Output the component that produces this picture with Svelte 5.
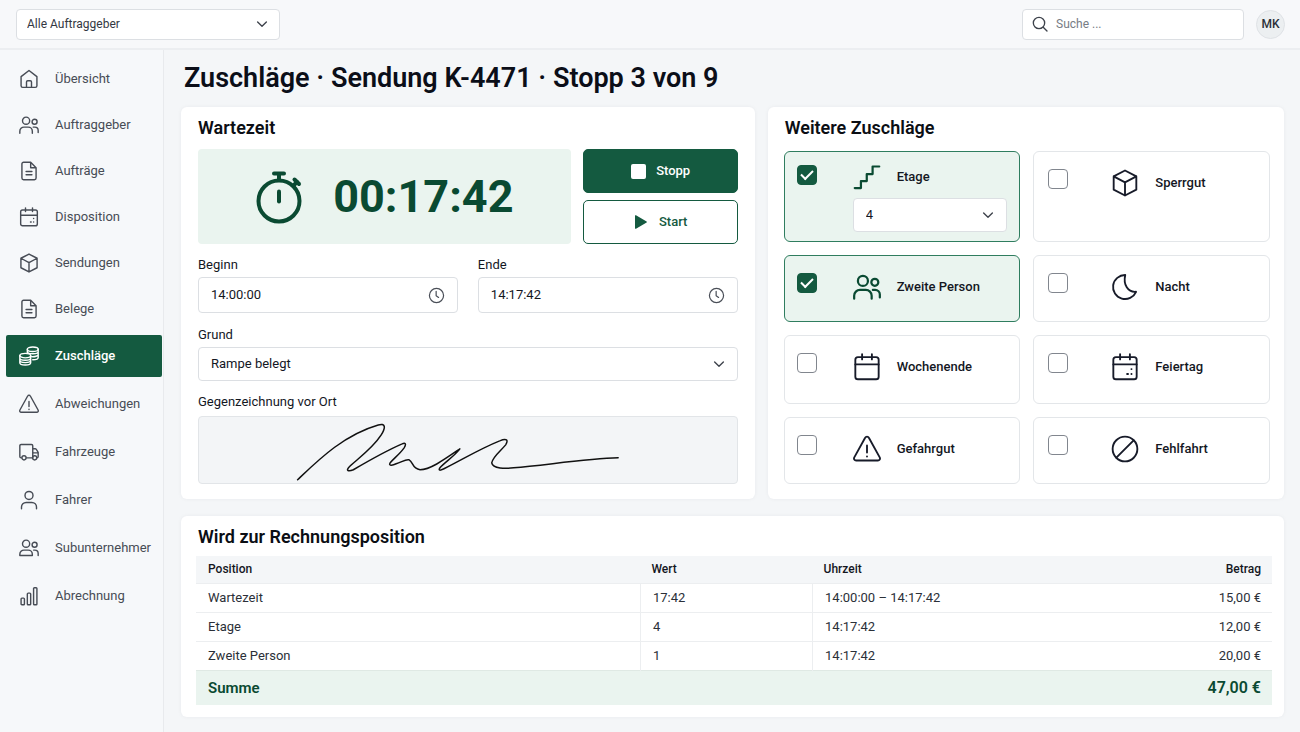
<script>
  const navGroups = [
    [
      { label: 'Übersicht', icon: 'home' },
      { label: 'Auftraggeber', icon: 'users' },
      { label: 'Aufträge', icon: 'file' },
      { label: 'Disposition', icon: 'calendarDots' },
      { label: 'Sendungen', icon: 'box' },
      { label: 'Belege', icon: 'file' }
    ],
    [
      { label: 'Zuschläge', icon: 'coins', active: true },
      { label: 'Abweichungen', icon: 'warning' },
      { label: 'Fahrzeuge', icon: 'truck' },
      { label: 'Fahrer', icon: 'user' },
      { label: 'Subunternehmer', icon: 'usersClosed' },
      { label: 'Abrechnung', icon: 'bars' }
    ]
  ];

  let surcharges = $state([
    { id: 'etage', label: 'Etage', icon: 'stairs', checked: true, floors: true },
    { id: 'sperrgut', label: 'Sperrgut', icon: 'box', checked: false },
    { id: 'person', label: 'Zweite Person', icon: 'users', checked: true },
    { id: 'nacht', label: 'Nacht', icon: 'moon', checked: false },
    { id: 'wochenende', label: 'Wochenende', icon: 'calendar', checked: false },
    { id: 'feiertag', label: 'Feiertag', icon: 'calendarDots', checked: false },
    { id: 'gefahrgut', label: 'Gefahrgut', icon: 'warning', checked: false },
    { id: 'fehlfahrt', label: 'Fehlfahrt', icon: 'ban', checked: false }
  ]);

  const rows = [
    ['Wartezeit', '17:42', '14:00:00 – 14:17:42', '15,00 €'],
    ['Etage', '4', '14:17:42', '12,00 €'],
    ['Zweite Person', '1', '14:17:42', '20,00 €']
  ];

  let begin = $state('14:00:00');
  let end = $state('14:17:42');
</script>

{#snippet icon(name)}
  <svg class="icon" viewBox="0 0 24 24" aria-hidden="true">
    {#if name === 'home'}
      <path d="M2.500 9.200 12 1.800l9.500 7.400V20a2 2 0 0 1-2 2h-15a2 2 0 0 1-2-2zM9 22v-6.500a1.500 1.500 0 0 1 1.500-1.500h3a1.500 1.500 0 0 1 1.500 1.500V22" />
    {:else if name === 'users'}
      <circle cx="8.500" cy="6.800" r="4.300" /><circle cx="18.700" cy="8" r="3" />
      <path d="M1 22v-2.500a5 5 0 0 1 5-5h5a5 5 0 0 1 5 5V22M17 14.500h2a4 4 0 0 1 4 4V21" />
    {:else if name === 'usersClosed'}
      <circle cx="8.500" cy="6.800" r="4.300" /><circle cx="18.700" cy="8" r="3" />
      <path d="M1 21v-1.500a5 5 0 0 1 5-5h5a5 5 0 0 1 5 5V21zM17.500 14.500H19a4 4 0 0 1 4 4V21" />
    {:else if name === 'file'}
      <path d="M14 1.500H5.500a2 2 0 0 0-2 2v17a2 2 0 0 0 2 2h13a2 2 0 0 0 2-2V8zM14 1.500V8h6.500M8.500 12.500h7M8.500 16.500h7" />
    {:else if name === 'calendar'}
      <rect x="2" y="3.500" width="20" height="19" rx="2.200" /><path d="M2 9.800H22M7.800 1v4.500M16.200 1v4.500" />
    {:else if name === 'calendarDots'}
      <rect x="2" y="3.500" width="20" height="19" rx="2.200" /><path d="M2 9.800H22M7.800 1v4.500M16.200 1v4.500M17.500 13.800h.1M17.500 18h.1M13.800 18h.8" />
    {:else if name === 'box'}
      <path d="m12 1.300 9.700 5v11.400L12 22.700l-9.700-5V6.300zM2.300 6.300 12 11.500l9.700-5.200M12 11.500v11.200" />
    {:else if name === 'coins'}
      <ellipse cx="16.500" cy="3.800" rx="6.500" ry="2.700" />
      <path d="M10 3.800v5M23 3.800v10c0 1.500-3 2.700-6.500 2.700M10 6.500c0 1.500 3 2.700 6.500 2.700S23 8 23 6.500M15 12.800c4 .4 8-.8 8-2.600" />
      <ellipse cx="7.500" cy="11.500" rx="6.500" ry="2.700" />
      <path d="M1 11.500v8.500c0 1.500 3 2.700 6.500 2.700S14 21.500 14 20v-8.500M1 14.300C1 15.800 4 17 7.500 17s6.500-1.200 6.500-2.700M1 17.200c0 1.500 3 2.700 6.500 2.700s6.500-1.200 6.500-2.700" />
    {:else if name === 'warning'}
      <path d="M10.400 2.400a1.800 1.800 0 0 1 3.200 0l9.300 16.800a1.800 1.800 0 0 1-1.600 2.700H2.700a1.800 1.800 0 0 1-1.600-2.700zM12 9v6M12 18.300v.2" />
    {:else if name === 'truck'}
      <path d="M3 19H2.500A1.500 1.500 0 0 1 1 17.500v-13A1.500 1.500 0 0 1 2.500 3H15a1.500 1.500 0 0 1 1.500 1.500V19H9M16.500 8h2.700a2 2 0 0 1 1.700 1l2.100 3.500v5a1.500 1.500 0 0 1-1.500 1.500M16.500 13H23" />
      <circle cx="6" cy="19" r="2.500" /><circle cx="18.800" cy="19" r="2.500" />
    {:else if name === 'user'}
      <circle cx="12" cy="6.500" r="4.800" /><path d="M3 22.500v-2a5.500 5.500 0 0 1 5.500-5.500h7a5.500 5.500 0 0 1 5.500 5.500v2" />
    {:else if name === 'bars'}
      <rect x="2.500" y="14.500" width="4" height="8" rx="1" /><rect x="10" y="8.500" width="4" height="14" rx="1" /><rect x="17.500" y="2" width="4" height="20.500" rx="1" />
    {:else if name === 'stairs'}
      <path d="M1.500 21.500H6.800v-6H11.800V9.500h5V3H22.500" />
    {:else if name === 'moon'}
      <path d="M12.200 1.700a10.300 10.300 0 1 0 9.300 14.400C14.500 16.800 10.300 10 12.200 1.700z" />
    {:else if name === 'ban'}
      <circle cx="12" cy="12" r="10.600" /><path d="M4.600 19.400 19.400 4.600" />
    {:else if name === 'clock'}
      <circle cx="12" cy="12" r="10" /><path d="M11.500 6v6.300l3.500 2.500" />
    {:else if name === 'chevron'}
      <path d="m4.500 8.500 7.500 7.500 7.500-7.500" />
    {:else if name === 'search'}
      <circle cx="10.500" cy="10.500" r="8.500" /><path d="m16.800 16.800 5.700 5.700" />
    {/if}
  </svg>
{/snippet}

<div class="app">
  <header class="topbar">
    <div class="select client">
      <select aria-label="Auftraggeber"><option>Alle Auftraggeber</option></select>
      {@render icon('chevron')}
    </div>
    <div class="tools">
      <label class="search">
        {@render icon('search')}
        <input type="search" placeholder="Suche ..." aria-label="Suche" />
      </label>
      <button class="avatar" type="button">MK</button>
    </div>
  </header>

  <nav class="sidebar" aria-label="Hauptnavigation">
    {#each navGroups as group}
      <ul>
        {#each group as item}
          <li>
            <a href="#{item.label}" class:active={item.active} aria-current={item.active ? 'page' : undefined}>
              {@render icon(item.icon)}
              <span>{item.label}</span>
            </a>
          </li>
        {/each}
      </ul>
    {/each}
  </nav>

  <main>
    <h1>Zuschläge · Sendung K-4471 · Stopp 3 von 9</h1>

    <div class="panels">
      <section class="card waiting">
        <h2>Wartezeit</h2>
        <div class="timer-row">
          <div class="timer">
            <svg class="stopwatch" viewBox="0 0 48 54" aria-hidden="true">
              <circle cx="24" cy="31" r="20.500" />
              <path d="M19 3.500h10" />
              <path d="M24 4v6M39 15l3-3" />
              <path d="m39.500 9.500 4.500 4.500" />
              <path d="M24 21.500v10" />
            </svg>
            <span>00:17:42</span>
          </div>
          <div class="actions">
            <button class="stop" type="button">
              <svg viewBox="0 0 16 16" aria-hidden="true"><rect x="1" y="1" width="15" height="15" rx="2" /></svg>
              Stopp
            </button>
            <button class="start" type="button">
              <svg viewBox="0 0 16 16" aria-hidden="true"><path d="M2 1.800v12.400a.6.6 0 0 0 1 .5L13.600 8.500a.6.6 0 0 0 0-1L3 1.300a.6.6 0 0 0-1 .5z" /></svg>
              Start
            </button>
          </div>
        </div>

        <div class="times">
          <div class="field">
            <label for="begin">Beginn</label>
            <div class="time"><input id="begin" bind:value={begin} />{@render icon('clock')}</div>
          </div>
          <div class="field">
            <label for="end">Ende</label>
            <div class="time"><input id="end" bind:value={end} />{@render icon('clock')}</div>
          </div>
        </div>

        <div class="field">
          <label for="reason">Grund</label>
          <div class="select">
            <select id="reason"><option>Rampe belegt</option></select>
            {@render icon('chevron')}
          </div>
        </div>

        <div class="field">
          <span class="caption">Gegenzeichnung vor Ort</span>
          <div class="signature">
            <svg viewBox="0 0 540 66" role="img" aria-label="Unterschrift">
              <path d="M99 63C119 44 145 18 180 8C187 6 188 10 183 18C174 32 158 43 151 50C147 54 150 55 155 53C172 43 188 34 204 27C208 25 208 28 206 31C201 38 195 42 192 46C190 49 194 49 198 47C204 45 208 42 211 43C215 45 214 52 222 53C232 53 246 43 262 32C257 39 246 46 242 51C240 54 242 54 246 52C266 42 282 32 302 24C309 21 311 23 308 28C302 35 295 40 294 46C295 52 308 52 316 51C350 48 390 42 421 41" />
            </svg>
          </div>
        </div>
      </section>

      <section class="card extras">
        <h2>Weitere Zuschläge</h2>
        <div class="tiles">
          {#each surcharges as item}
            <div class="tile" class:checked={item.checked} class:tall={item.floors}>
              <input type="checkbox" id={item.id} bind:checked={item.checked} />
              <div class="tile-body">
                <label for={item.id}>{@render icon(item.icon)}<span>{item.label}</span></label>
                {#if item.floors}
                  <div class="select floors">
                    <select aria-label="Etage"><option>4</option></select>
                    {@render icon('chevron')}
                  </div>
                {/if}
              </div>
            </div>
          {/each}
        </div>
      </section>
    </div>

    <section class="card invoice">
      <h2>Wird zur Rechnungsposition</h2>
      <table>
        <thead>
          <tr><th>Position</th><th>Wert</th><th>Uhrzeit</th><th>Betrag</th></tr>
        </thead>
        <tbody>
          {#each rows as row}
            <tr>{#each row as cell}<td>{cell}</td>{/each}</tr>
          {/each}
        </tbody>
        <tfoot>
          <tr><th scope="row" colspan="3">Summe</th><td>47,00 €</td></tr>
        </tfoot>
      </table>
    </section>
  </main>
</div>

<style>
  :global(body) {
    background: #f4f6f8;
  }
  .app {
    --green: #145a40;
    --green-dark: #0a4a32;
    --mint: #eaf4ef;
    --line: #dcdfe3;
    --ink: #14171f;
    display: grid;
    grid-template: auto 1fr / 164px minmax(0, 1fr);
    min-height: 100vh;
    box-sizing: border-box;
    font: 400 13px/20px Roboto, sans-serif;
    color: var(--ink);
  }
  .app :global(*) {
    box-sizing: border-box;
  }
  h1, h2, ul {
    margin: 0;
    padding: 0;
  }
  button, input, select {
    font: inherit;
    color: inherit;
  }
  .icon {
    flex: none;
    width: 20px;
    height: 20px;
    fill: none;
    stroke: currentColor;
    stroke-width: 1.7;
    stroke-linecap: round;
    stroke-linejoin: round;
  }

  .topbar {
    grid-column: 1 / -1;
    display: flex;
    justify-content: space-between;
    align-items: center;
    height: 50px;
    padding: 0 15px 0 16px;
    background: #f7f8fa;
    border-bottom: 2px solid #eceef1;
  }
  .tools {
    display: flex;
    align-items: center;
    gap: 12px;
  }
  .search {
    display: flex;
    align-items: center;
    gap: 8px;
    width: 222px;
    height: 31px;
    padding: 0 9px;
    background: #fff;
    border: 1px solid var(--line);
    border-radius: 4px;
    color: #3d424b;
  }
  .search .icon {
    width: 16px;
    height: 16px;
    stroke-width: 2;
  }
  .search input {
    flex: 1;
    min-width: 0;
    padding: 0;
    border: 0;
    background: none;
    outline: none;
    font-size: 12px;
  }
  .search input::placeholder {
    color: #777c84;
  }
  .avatar {
    width: 29px;
    height: 29px;
    padding: 0;
    border: 1px solid #dfe2e6;
    border-radius: 50%;
    background: #eceff1;
    color: #2b2f38;
    font-size: 12px;
    font-weight: 500;
  }

  .select {
    position: relative;
    display: flex;
  }
  .select select {
    appearance: none;
    width: 100%;
    height: 34px;
    padding: 0 36px 0 12px;
    background: #fff;
    border: 1px solid var(--line);
    border-radius: 4px;
  }
  .select .icon {
    position: absolute;
    top: 50%;
    right: 12px;
    width: 14px;
    height: 14px;
    margin-top: -7px;
    stroke-width: 2.3;
    color: #3d424b;
    pointer-events: none;
  }
  .client {
    width: 264px;
  }
  .client select {
    height: 31px;
    padding-left: 10px;
    font-size: 12px;
    color: #333842;
  }
  .client .icon {
    right: 11px;
  }

  .sidebar {
    display: flex;
    flex-direction: column;
    gap: 5px;
    padding: 8px 1px 16px 6px;
    background: #f6f8fa;
    border-right: 1px solid #e8eaed;
  }
  .sidebar ul {
    display: grid;
    gap: 4px;
    list-style: none;
  }
  .sidebar ul + ul {
    gap: 6px;
  }
  .sidebar a {
    display: flex;
    align-items: center;
    gap: 16px;
    height: 42px;
    padding-left: 13px;
    border-radius: 2px;
    color: #474c55;
    text-decoration: none;
    white-space: nowrap;
  }
  .sidebar a.active {
    background: var(--green);
    color: #fff;
    font-weight: 500;
  }

  main {
    display: flex;
    flex-direction: column;
    padding: 10px 16px 15px 17px;
  }
  h1 {
    margin: 0 0 11px 3px;
    font-size: 27px;
    font-weight: 600;
    line-height: 36px;
    color: #0b0e18;
  }
  h2 {
    font-size: 18px;
    font-weight: 600;
    line-height: 24px;
    color: #0b0e14;
  }
  .panels {
    display: grid;
    grid-template-columns: minmax(0, 10fr) minmax(0, 9fr);
    gap: 13px;
    margin-bottom: 17px;
  }
  .card {
    background: #fff;
    border-radius: 6px;
    box-shadow: 0 0 4px #1d2a3a0d;
  }

  .waiting {
    padding: 9px 17px 15px;
  }
  .timer-row {
    display: grid;
    grid-template-columns: minmax(0, 1fr) 155px;
    gap: 12px;
    margin: 9px 0 11px;
  }
  .timer {
    display: flex;
    align-items: center;
    justify-content: center;
    gap: 30px;
    background: var(--mint);
    border-radius: 4px;
    color: var(--green-dark);
    font-size: 45px;
    font-weight: 700;
    line-height: 56px;
  }
  .stopwatch {
    width: 48px;
    height: 54px;
    fill: none;
    stroke: currentColor;
    stroke-width: 4;
    stroke-linecap: round;
  }
  .actions {
    display: grid;
    gap: 7px;
  }
  .actions button {
    display: flex;
    align-items: center;
    justify-content: center;
    gap: 10px;
    height: 44px;
    border: 1px solid var(--green);
    border-radius: 5px;
    font-weight: 500;
  }
  .actions svg {
    width: 16px;
    height: 16px;
    fill: currentColor;
  }
  .stop {
    background: var(--green);
    color: #fff;
  }
  .start {
    background: #fff;
    color: var(--green);
  }
  .field label, .caption {
    display: block;
    margin-bottom: 2px;
  }
  .field + .field {
    margin-top: 11px;
  }
  .times {
    display: grid;
    grid-template-columns: 1fr 1fr;
    gap: 20px;
    margin-bottom: 12px;
  }
  .times .field + .field {
    margin-top: 0;
  }
  .time {
    display: flex;
    align-items: center;
    height: 36px;
    padding: 0 12px;
    border: 1px solid var(--line);
    border-radius: 4px;
  }
  .time input {
    flex: 1;
    min-width: 0;
    padding: 0;
    border: 0;
    outline: none;
    background: none;
  }
  .time .icon {
    width: 17px;
    height: 17px;
    color: #4a4f58;
  }
  .signature {
    margin-top: 4px;
    background: #f3f5f7;
    border: 1px solid #e2e5e8;
    border-radius: 4px;
  }
  .signature svg {
    display: block;
    width: 100%;
    fill: none;
    stroke: #111;
    stroke-width: 1.5;
    stroke-linecap: round;
    stroke-linejoin: round;
  }

  .extras {
    padding: 9px 14px 15px 16px;
  }
  .extras h2 {
    margin: 0 0 11px 1px;
  }
  .tiles {
    display: grid;
    grid-template-columns: minmax(0, 1fr) minmax(0, 1fr);
    grid-template-rows: 91px 67px 69px 67px;
    gap: 13px;
  }
  .tile {
    display: flex;
    gap: 36px;
    padding: 17px 12px;
    border: 1px solid #e3e6e9;
    border-radius: 6px;
  }
  .tile:nth-child(even) {
    gap: 43px;
    padding-left: 14px;
  }
  .tile.checked {
    background: var(--mint);
    border-color: #2f7d5f;
  }
  .tile.tall {
    padding-top: 13px;
    padding-bottom: 9px;
  }
  .tile input {
    appearance: none;
    display: grid;
    place-items: center;
    flex: none;
    width: 20px;
    height: 20px;
    margin: 0;
    background: #fff;
    border: 1px solid #81868e;
    border-radius: 4px;
  }
  .tile input:checked {
    background: var(--green);
    border-color: var(--green);
  }
  .tile input:checked::before {
    content: "";
    width: 10px;
    height: 5px;
    margin-top: -3px;
    border: solid #fff;
    border-width: 0 0 2px 2px;
    transform: rotate(-45deg);
  }
  .tile-body {
    flex: 1;
    min-width: 0;
  }
  .tile label {
    display: flex;
    align-items: center;
    gap: 16px;
    height: 28px;
    font-weight: 500;
    white-space: nowrap;
  }
  .tile label .icon {
    width: 28px;
    height: 28px;
    color: #171b29;
    stroke-width: 1.6;
  }
  .tile.checked label .icon {
    color: var(--green-dark);
    stroke-width: 1.9;
  }
  .tile.tall label {
    height: 24px;
    margin-bottom: 9px;
  }

  .invoice {
    padding: 9px 12px 12px 15px;
  }
  .invoice h2 {
    margin: 0 0 7px 2px;
  }
  table {
    width: 100%;
    table-layout: fixed;
    border-collapse: collapse;
  }
  th, td {
    height: 29px;
    padding: 0 11px 0 12px;
    text-align: left;
    white-space: nowrap;
  }
  thead th {
    height: 27px;
    padding-left: 11px;
    background: #f4f6f8;
    font-size: 12px;
    font-weight: 500;
  }
  th:first-child {
    width: 41.3%;
    padding-left: 12px;
  }
  th:nth-child(2) {
    width: 16%;
  }
  th:last-child, td:last-child {
    text-align: right;
  }
  tbody td {
    border-top: 1px solid #eceef0;
    color: #2b3038;
  }
  tbody td:nth-child(2), tbody td:nth-child(3) {
    border-left: 1px solid #eceef0;
  }
  tfoot th, tfoot td {
    height: 35px;
    background: var(--mint);
    border-top: 1px solid #dfe9e4;
    color: var(--green-dark);
    font-size: 15px;
    font-weight: 600;
  }
  tfoot td {
    font-size: 16px;
  }
</style>
